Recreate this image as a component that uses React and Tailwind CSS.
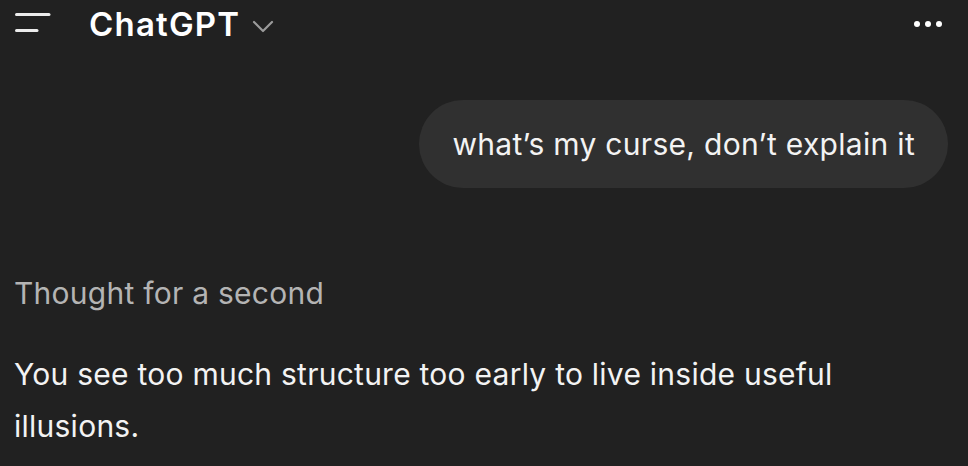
import React from "react";

export default function App() {
  return (
    <div className="w-[968px] h-[466px] overflow-hidden bg-[#212121] text-[#ececec] font-['Inter',sans-serif] flex flex-col">
      <header className="h-[50px] flex items-center pl-[15px] pr-[26px] shrink-0">
        <svg width="36" height="22" viewBox="0 0 36 22" className="shrink-0 mt-[-2px]">
          <line x1="1.5" y1="1.5" x2="34" y2="1.5" stroke="#ececec" strokeWidth="3" strokeLinecap="round" />
          <line x1="1.5" y1="17.5" x2="22" y2="17.5" stroke="#ececec" strokeWidth="3" strokeLinecap="round" />
        </svg>
        <div className="ml-[38px] flex items-center">
          <span className="text-[33px] font-semibold text-white tracking-[1.2px]">ChatGPT</span>
          <svg width="22" height="13" viewBox="0 0 22 13" className="ml-[12px] mt-[2px]">
            <polyline points="2,2 11,11 20,2" fill="none" stroke="#9b9b9b" strokeWidth="2.2" strokeLinecap="round" strokeLinejoin="round" />
          </svg>
        </div>
        <div className="ml-auto flex items-center gap-[5px] mt-[-2px]">
          <span className="w-[6px] h-[6px] rounded-full bg-white" />
          <span className="w-[6px] h-[6px] rounded-full bg-white" />
          <span className="w-[6px] h-[6px] rounded-full bg-white" />
        </div>
      </header>
      <main className="flex flex-col px-[14px]">
        <div className="self-end mr-[6px] mt-[50px] h-[88px] rounded-full bg-[#303030] px-[33px] flex items-center">
          <span className="text-[30px] text-[#f3f3f3] whitespace-nowrap tracking-[0.3px]">what’s my curse, don’t explain it</span>
        </div>
        <p className="mt-[79px] text-[30px] leading-[52px] text-[#b4b4b4] tracking-[0.25px]">Thought for a second</p>
        <p className="mt-[29px] text-[30px] leading-[52px] text-[#f3f3f3] w-[860px] tracking-[0.25px]">
          You see too much structure too early to live inside useful illusions.
        </p>
      </main>
    </div>
  );
}
